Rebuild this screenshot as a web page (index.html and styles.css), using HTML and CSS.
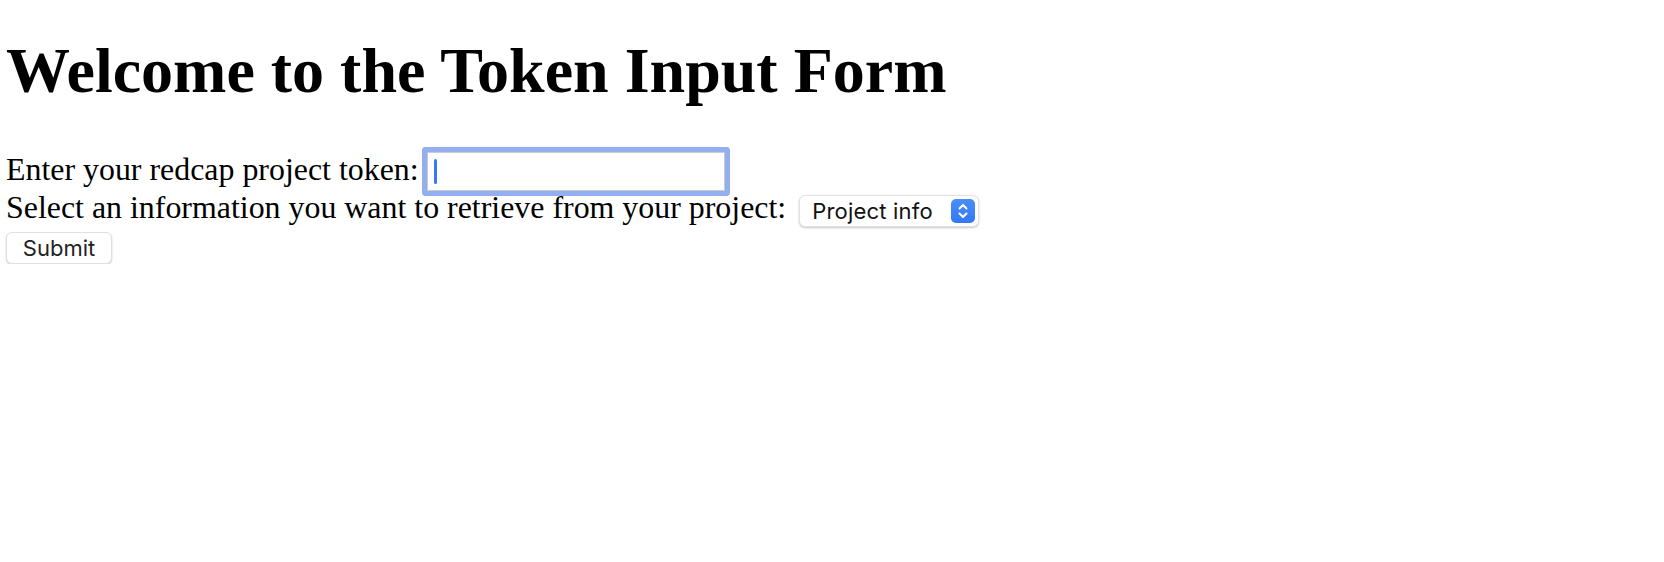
FILE: index.html
```html
<!DOCTYPE html>
<html lang="en">
<head>
<meta charset="utf-8">
<title>Token Input Form</title>
<link rel="stylesheet" href="styles.css">
</head>
<body>
<h1 class="title">Welcome to the Token Input Form</h1>
<form class="form">
  <div class="row row-token">
    <label class="label" for="token">Enter your redcap project token:</label>
    <span class="field-wrap">
      <input class="token-input" id="token" type="text">
      <span class="caret"></span>
    </span>
  </div>
  <div class="row row-select">
    <label class="label" for="info">Select an information you want to retrieve from your project:</label>
    <span class="select-wrap">
      <select class="select" id="info">
        <option>Project info</option>
      </select>
      <span class="select-arrow">
        <svg width="24" height="24" viewBox="0 0 24 24"><path d="M8.5 9.5 L12 6 L15.5 9.5" fill="none" stroke="#fff" stroke-width="2" stroke-linecap="round" stroke-linejoin="round"/><path d="M8.5 14.5 L12 18 L15.5 14.5" fill="none" stroke="#fff" stroke-width="2" stroke-linecap="round" stroke-linejoin="round"/></svg>
      </span>
    </span>
  </div>
  <button class="submit" type="button">Submit</button>
</form>
</body>
</html>
```
FILE: styles.css
```css
html, body {
  background: #ffffff;
}
body {
  margin: 0;
  padding: 0 6px;
  font-family: "Liberation Serif", "Times New Roman", serif;
  font-size: 32px;
  color: #000;
}
.title {
  font-size: 64px;
  font-weight: bold;
  line-height: 74px;
  margin: 34px 0 43px;
}
.form {
  display: flex;
  flex-direction: column;
  align-items: flex-start;
}
.row {
  display: flex;
  align-items: flex-start;
  height: 38px;
}
.label {
  font-size: 31.9px;
  line-height: 37px;
  white-space: nowrap;
}
.field-wrap {
  position: relative;
  display: block;
  margin-left: 8px;
  margin-top: 1px;
}
.token-input {
  display: block;
  box-sizing: border-box;
  width: 298px;
  height: 39px;
  margin: 0;
  padding: 0 8px;
  border: 1px solid #c9cbd1;
  border-radius: 1px;
  background: #fff;
  outline: none;
  box-shadow: 0 0 0 5px #94aff0;
  font-family: "Inter", sans-serif;
  font-size: 20px;
}
.caret {
  position: absolute;
  left: 7px;
  top: 7px;
  width: 3px;
  height: 25px;
  border-radius: 2px;
  background: #3a79f2;
}
.select-wrap {
  position: relative;
  display: block;
  margin-left: 13px;
  margin-top: 6px;
}
.select {
  display: block;
  box-sizing: border-box;
  width: 180px;
  height: 32px;
  margin: 0;
  padding: 0 0 0 12px;
  -webkit-appearance: none;
  appearance: none;
  border: 1px solid #e2e2e2;
  border-radius: 6px;
  background: #fff;
  box-shadow: 0 1px 2px rgba(0, 0, 0, 0.22);
  font-family: "Inter", sans-serif;
  font-size: 22px;
  letter-spacing: 0.2px;
  color: #111;
  outline: none;
}
.select-arrow {
  position: absolute;
  right: 4px;
  top: 4px;
  width: 24px;
  height: 24px;
  border-radius: 5px;
  background: linear-gradient(#4a8ef8, #3478f6);
  display: flex;
}
.submit {
  box-sizing: border-box;
  width: 106px;
  height: 32px;
  margin: 5px 0 0 0;
  padding: 0;
  border: 1px solid #e0e0e0;
  border-radius: 6px;
  background: #fff;
  box-shadow: 0 1px 2px rgba(0, 0, 0, 0.2);
  font-family: "Inter", sans-serif;
  font-size: 22px;
  color: #222;
}
```
